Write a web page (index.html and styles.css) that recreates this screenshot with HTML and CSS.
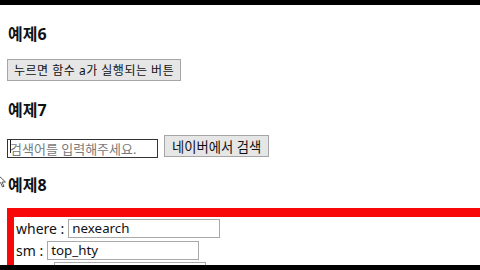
FILE: index.html
```html
<!DOCTYPE html>
<html lang="ko">
<head>
    <meta charset="UTF-8">
    <meta name="viewport" content="width=device-width, initial-scale=1.0">
    <title>예제</title>
    <link rel="stylesheet" href="styles.css">
</head>
<body>
<div class="screen">
    <div class="bar"></div>

    <div class="page">
        <h3 class="exTitle">예제6</h3>
        <button class="btn btnSmall" onclick="a()">누르면 함수 a가 실행되는 버튼</button>

        <h3 class="exTitle">예제7</h3>
        <div class="searchRow">
            <span class="focusWrap">
                <input type="text" class="searchInput" placeholder="검색어를 입력해주세요.">
            </span>
            <button class="btn">네이버에서 검색</button>
        </div>

        <h3 class="exTitle">예제8</h3>
        <div class="redBox">
            <div class="field"><label>where :</label><input type="text" class="fieldInput" value="nexearch"></div>
            <div class="field"><label>sm :</label><input type="text" class="fieldInput" value="top_hty"></div>
            <div class="field lastField"><label>fbm :</label><input type="text" class="fieldInput" value="1"></div>
        </div>

        <!-- mouse pointer caught in the capture -->
        <svg class="pointer" width="10" height="14" viewBox="0 0 10 14">
            <path d="M1 1 L1 11 L3.5 8.5 L5.5 13 L7 12.3 L5 8 L8.5 8 Z" fill="#fff" stroke="#555" stroke-width="1"/>
        </svg>
    </div>

    <div class="bar"></div>
</div>
</body>
</html>
```

FILE: styles.css
```css
body {
    margin: 0;
    background-color: #000;
    font-family: "Noto Sans", "Noto Sans CJK KR", sans-serif;
}

.screen {
    width: 480px;
    height: 270px;
    display: flex;
    flex-direction: column;
    overflow: hidden;
}

.bar {
    height: 5px;
    flex: none;
    background-color: #000;
}

.page {
    height: 260px;
    flex: none;
    background-color: #fff;
    padding-left: 7px;
    overflow: hidden;
    position: relative;
}

.exTitle {
    font-size: 16px;
    font-weight: bold;
    line-height: 24px;
    height: 24px;
    margin: 17px 0 13px 1px;
    color: #111;
}

.btn {
    display: block;
    height: 22px;
    padding: 0 7px;
    font-family: "Noto Sans", "Noto Sans CJK KR", sans-serif;
    font-size: 13.33px;
    color: #111;
    background-color: #e6e6e6;
    border: 1px solid #a6a6a6;
    border-radius: 0;
}

.btnSmall {
    font-size: 12px;
    letter-spacing: 0.5px;
    padding: 0 6px;
}

.searchRow {
    display: flex;
    align-items: center;
    gap: 6px;
    height: 22px;
}

.searchRow + .exTitle {
    margin-top: 16px;
    margin-bottom: 11px;
}

.focusWrap {
    position: relative;
    display: block;
    height: 19px;
}

.focusWrap::after {
    content: "";
    position: absolute;
    left: 3px;
    top: 3px;
    width: 1px;
    height: 13px;
    background-color: #222;
}

.searchInput {
    box-sizing: border-box;
    width: 151px;
    height: 19px;
    padding: 0 2px;
    font-family: "Noto Sans", "Noto Sans CJK KR", sans-serif;
    font-size: 13px;
    border: 1px solid #333;
    outline: none;
}

.searchInput::placeholder {
    color: #7a7a7a;
}

.redBox {
    border: 8px solid #f80808;
    border-top-width: 9px;
    border-left-width: 7px;
    padding: 0 0 0 2px;
    margin-right: -40px;
}

.field {
    display: flex;
    align-items: center;
    gap: 4px;
    height: 22px;
    font-size: 14px;
    color: #111;
}

.lastField {
    align-items: flex-start;
    padding-top: 1px;
}

.fieldInput {
    box-sizing: border-box;
    width: 152px;
    height: 19px;
    padding: 0 3px;
    font-family: "Noto Sans", sans-serif;
    font-size: 13.33px;
    color: #111;
    border: 1px solid #a9a9a9;
}

.pointer {
    position: absolute;
    left: -3px;
    top: 169px;
}
```
